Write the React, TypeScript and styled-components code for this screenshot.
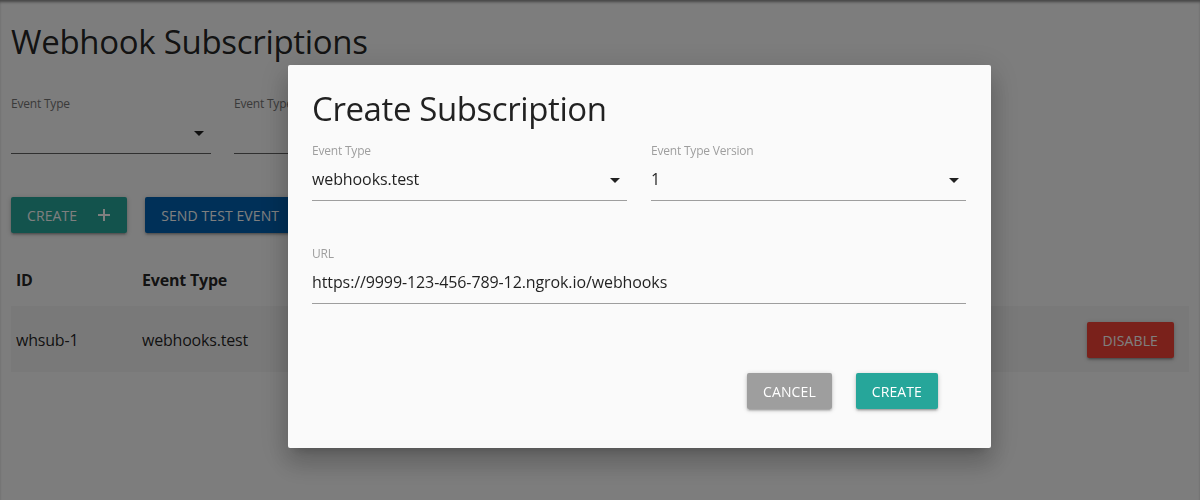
import React from "react";
import styled, { createGlobalStyle } from "styled-components";

const Global = createGlobalStyle`
  html, body { margin: 0; padding: 0; }
  body {
    background: #fafafa;
    font-family: "Open Sans", "Noto Sans", sans-serif;
    color: rgba(0,0,0,0.87);
    width: 1200px;
    height: 500px;
    overflow: hidden;
  }
  * { box-sizing: border-box; }
`;

const Page = styled.div`
  position: relative;
  width: 1200px;
  height: 500px;
  padding: 0 11px;
  box-shadow: inset 0 3px 3px -1px rgba(0,0,0,0.45);
`;

const Title = styled.h1`
  margin: 0;
  padding-top: 21px;
  font-size: 33px;
  line-height: 42px;
  font-weight: 400;
  letter-spacing: -0.3px;
`;

const FilterRow = styled.div`
  display: flex;
  gap: 23px;
  margin-top: 33px;
`;

const Field = styled.div<{ $w?: number }>`
  display: flex;
  flex-direction: column;
  width: ${(p) => (p.$w ? `${p.$w}px` : "auto")};
  flex: ${(p) => (p.$w ? "none" : "1")};
`;

const Label = styled.div`
  font-size: 12px;
  line-height: 16px;
  color: #9e9e9e;
  letter-spacing: -0.2px;
`;

const PageLabel = styled(Label)`
  color: #757575;
`;

const SelectBox = styled.div`
  position: relative;
  height: 42px;
  display: flex;
  align-items: flex-start;
  padding-top: 9px;
  font-size: 16px;
  line-height: 22px;
  border-bottom: 1px solid #9e9e9e;
  padding-right: 24px;
  letter-spacing: -0.1px;
`;

const PageSelect = styled(SelectBox)`
  border-bottom-color: #616161;
`;

const Caret = styled.span`
  position: absolute;
  right: 7px;
  top: 19px;
  width: 0;
  height: 0;
  border-left: 5px solid transparent;
  border-right: 5px solid transparent;
  border-top: 5px solid rgba(0,0,0,0.87);
`;

const ButtonRow = styled.div`
  display: flex;
  gap: 18px;
  margin-top: 43px;
`;

const Btn = styled.button<{ $bg: string }>`
  height: 36px;
  padding: 0 16px;
  border: none;
  border-radius: 2px;
  background: ${(p) => p.$bg};
  color: #fff;
  font-family: inherit;
  font-size: 14px;
  letter-spacing: 0.1px;
  text-transform: uppercase;
  display: inline-flex;
  align-items: center;
  gap: 20px;
  box-shadow: 0 2px 2px 0 rgba(0,0,0,0.14), 0 3px 1px -2px rgba(0,0,0,0.12), 0 1px 5px 0 rgba(0,0,0,0.2);
  cursor: pointer;
`;

const Table = styled.table`
  width: 100%;
  border-collapse: collapse;
  margin-top: 24px;
  font-size: 16px;
`;

const Th = styled.th<{ $w?: number }>`
  text-align: left;
  font-weight: 700;
  padding: 9px 5px 13px;
  height: 49px;
  width: ${(p) => (p.$w ? `${p.$w}px` : "auto")};
  letter-spacing: -0.2px;
`;

const Tr = styled.tr<{ $shade?: boolean }>`
  background: ${(p) => (p.$shade ? "#f2f2f2" : "transparent")};
`;

const Td = styled.td<{ $right?: boolean }>`
  padding: 0 5px;
  height: 66px;
  text-align: ${(p) => (p.$right ? "right" : "left")};
  padding-right: ${(p) => (p.$right ? "15px" : "5px")};
  padding-top: 2px;
  letter-spacing: -0.2px;
`;

const Overlay = styled.div`
  position: fixed;
  inset: 0;
  background: rgba(0,0,0,0.5);
`;

const Dialog = styled.div`
  position: fixed;
  left: 288px;
  top: 65px;
  width: 703px;
  height: 383px;
  background: #fafafa;
  border-radius: 2px;
  box-shadow: 0 16px 24px 2px rgba(0,0,0,0.14), 0 6px 30px 5px rgba(0,0,0,0.12), 0 8px 10px -7px rgba(0,0,0,0.2);
  padding: 23px 25px 0 24px;
  display: flex;
  flex-direction: column;
`;

const DialogTitle = styled.h2`
  margin: 0;
  font-size: 33px;
  line-height: 42px;
  font-weight: 400;
  letter-spacing: -0.4px;
`;

const Grid = styled.div`
  display: grid;
  grid-template-columns: 1fr 1fr;
  column-gap: 24px;
  margin-top: 13px;
`;

const UrlBlock = styled.div`
  margin-top: 45px;
`;

const Footer = styled.div`
  display: flex;
  justify-content: flex-end;
  gap: 24px;
  margin-top: 69px;
  padding-right: 28px;
`;

const PlusIcon = () => (
  <svg width="14" height="14" viewBox="0 0 14 14">
    <path d="M7 1v12M1 7h12" stroke="#fff" strokeWidth="2" />
  </svg>
);

export default function App() {
  return (
    <>
      <Global />
      <Page>
        <Title>Webhook Subscriptions</Title>
        <FilterRow>
          <Field $w={200}>
            <PageLabel>Event Type</PageLabel>
            <PageSelect>
              <Caret />
            </PageSelect>
          </Field>
          <Field $w={200}>
            <PageLabel>Event Type</PageLabel>
            <PageSelect>
              <Caret />
            </PageSelect>
          </Field>
        </FilterRow>
        <ButtonRow>
          <Btn $bg="#26a69a">
            Create <PlusIcon />
          </Btn>
          <Btn $bg="#0060b0">Send Test Event</Btn>
        </ButtonRow>
        <Table>
          <thead>
            <tr>
              <Th $w={126}>ID</Th>
              <Th $w={200}>Event Type</Th>
              <Th $w={160}></Th>
              <Th></Th>
              <Th $w={120}></Th>
            </tr>
          </thead>
          <tbody>
            <Tr $shade>
              <Td>whsub-1</Td>
              <Td>webhooks.test</Td>
              <Td></Td>
              <Td></Td>
              <Td $right>
                <Btn $bg="#f44336">Disable</Btn>
              </Td>
            </Tr>
          </tbody>
        </Table>
      </Page>
      <Overlay />
      <Dialog>
        <DialogTitle>Create Subscription</DialogTitle>
        <Grid>
          <Field>
            <Label>Event Type</Label>
            <SelectBox>
              webhooks.test
              <Caret />
            </SelectBox>
          </Field>
          <Field>
            <Label>Event Type Version</Label>
            <SelectBox>
              1
              <Caret />
            </SelectBox>
          </Field>
        </Grid>
        <UrlBlock>
          <Field>
            <Label>URL</Label>
            <SelectBox>https://9999-123-456-789-12.ngrok.io/webhooks</SelectBox>
          </Field>
        </UrlBlock>
        <Footer>
          <Btn $bg="#9e9e9e">Cancel</Btn>
          <Btn $bg="#26a69a">Create</Btn>
        </Footer>
      </Dialog>
    </>
  );
}
